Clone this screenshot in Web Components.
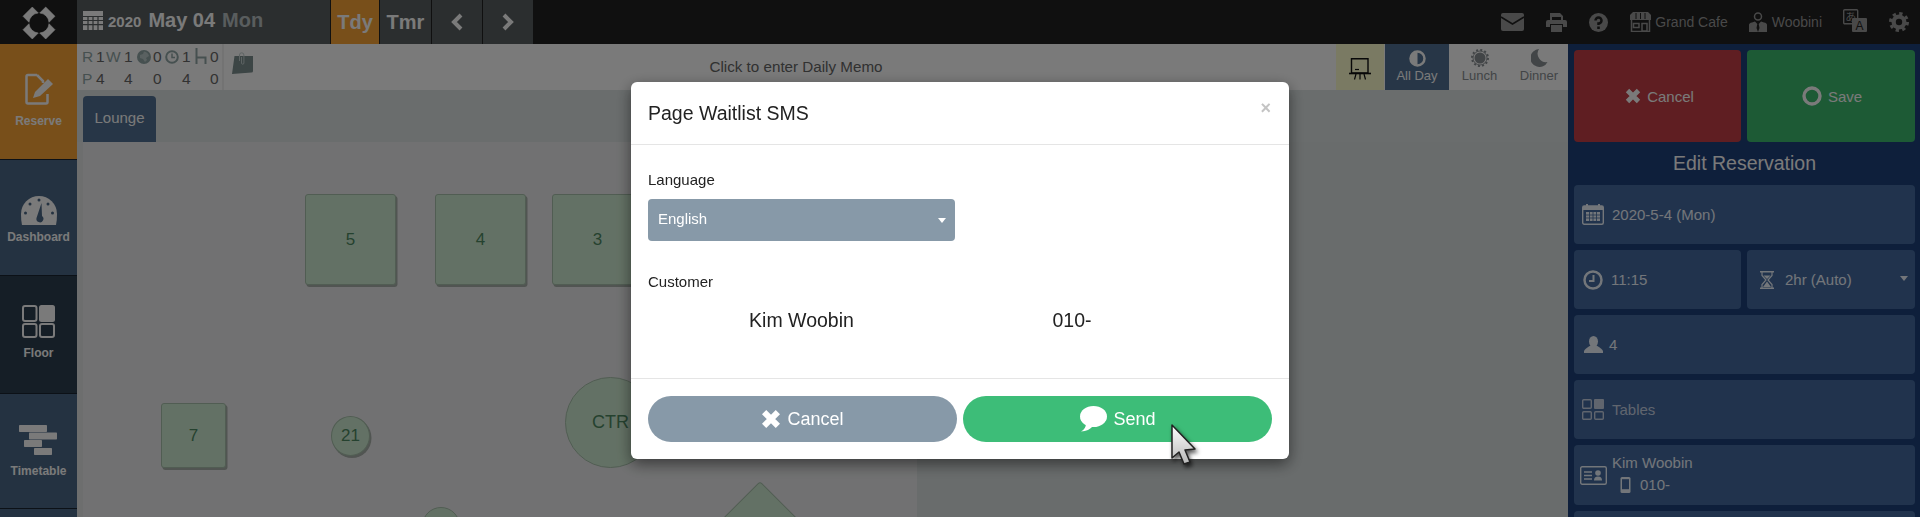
<!DOCTYPE html>
<html lang="en">
<head>
<meta charset="utf-8">
<title>Page Waitlist SMS</title>
<style>
html,body{margin:0;padding:0;height:517px;overflow:hidden;font-family:"Liberation Sans",Arial,sans-serif;font-size:15px;background:#ecedee}
</style>
</head>
<body>
<app-shell>
  <top-bar slot="top"></top-bar>
  <side-nav slot="nav">
    <nav-item label="Reserve" icon="reserve" style="--bg:#fba537;--pt:27px;--h:115px"></nav-item>
    <nav-item label="Dashboard" icon="gauge" style="--bg:#4d6a88;--pt:32px;--h:115px;--lm:2px"></nav-item>
    <nav-item label="Floor" icon="floor" style="--bg:#2d3f50;--pt:27px;--h:117px"></nav-item>
    <nav-item label="Timetable" icon="timetable" style="--bg:#4d6a88;--pt:28px;--h:114px;--lm:6px"></nav-item>
    <nav-item style="--bg:#4d6a88;--pt:0px;--h:40px"></nav-item>
  </side-nav>
  <main-area slot="main">
    <day-bar></day-bar>
    <tab-bar></tab-bar>
    <floor-plan>
      <floor-table style="--x:228px;--y:52px;--w:91px;--h:91px">5</floor-table>
      <floor-table style="--x:358px;--y:52px;--w:91px;--h:91px">4</floor-table>
      <floor-table style="--x:475px;--y:52px;--w:91px;--h:91px">3</floor-table>
      <floor-table style="--x:84px;--y:261px;--w:65px;--h:65px">7</floor-table>
      <floor-table style="--x:254px;--y:274px;--w:39px;--h:40px;--r:50%">21</floor-table>
      <floor-table style="--x:488px;--y:235px;--w:91px;--h:91px;--r:50%;--fs:18px;--s:0">CTR</floor-table>
      <floor-table style="--x:345px;--y:365px;--w:38px;--h:38px;--r:50%;--s:0"></floor-table>
      <floor-table style="--x:647px;--y:354px;--w:72px;--h:72px;--rot:45deg;--s:0"></floor-table>
    </floor-plan>
  </main-area>
  <res-panel slot="panel"></res-panel>
</app-shell>
<sms-modal></sms-modal>

<script>
const svg=(w,h,vb,body,extra='')=>`<svg xmlns="http://www.w3.org/2000/svg" width="${w}" height="${h}" viewBox="${vb}" fill="currentColor" ${extra}>${body}</svg>`;
const I={
 logo:svg(34,34,'-17 -17 34 34',[0,90,180,270].map(a=>`<path transform="rotate(${a})" d="M.7 -10L6.700 -16L16 -6.700L10 -.7A10 10 0 0 0 .7 -10Z" stroke="currentColor" stroke-width=".6" stroke-linejoin="round"/>`).join('')),
 cal:svg(20,20,'0 0 20 20','<path d="M0 1H20V20H0Z"/><path d="M0 6.500H20M0 10.500H20M0 14.700H20M5 6V20M10 6V20M15 6V20" stroke="#5a6062" stroke-width="1.200"/>'),
 left:svg(14,18,'0 0 14 18','<path d="M11 2L4 9L11 16" fill="none" stroke="currentColor" stroke-width="4"/>'),
 right:svg(14,18,'0 0 14 18','<path d="M3 2L10 9L3 16" fill="none" stroke="currentColor" stroke-width="4"/>'),
 mail:svg(23,18,'0 0 23 18','<rect width="23" height="18" rx="2"/><path d="M0 4L11.500 11L23 4" fill="none" stroke="#222" stroke-width="1.500"/>'),
 print:svg(21,19,'0 0 21 19','<path d="M4 0H14L17 3V8H15V4H6V8H4Z"/><path d="M2 7H19A2 2 0 0 1 21 9V14H17V11H4V14H0V9A2 2 0 0 1 2 7Z"/><path d="M5 12H16V19H5Z"/>'),
 help:svg(19,19,'0 0 19 19','<circle cx="9.500" cy="9.500" r="9.500"/><path d="M6.500 7.500A3 3 0 1 1 9.500 10.500V12" fill="none" stroke="#222" stroke-width="2.500"/><rect x="8.200" y="13.500" width="2.600" height="2.500" fill="#222"/>'),
 shop:svg(21,20,'0 0 21 20','<path d="M3 0H18L21 3V8H0V3Z"/><path d="M6 1V7M10.500 1V7M15 1V7" stroke="#222" stroke-width="1"/><path d="M1.500 8V19.500H19.500V8M3.500 11.500H9V15.500H3.500ZM12 11.500H17V19H12Z" fill="none" stroke="currentColor" stroke-width="1.500"/>'),
 user:svg(18,20,'0 0 18 20','<circle cx="9" cy="4.500" r="3.500" fill="none" stroke="currentColor" stroke-width="1.500"/><path d="M0 20V13Q0 11 3 10.500L6 9.500L8.300 12L7.500 16L9 20L10.500 16L9.700 12L12 9.500L15 10.500Q18 11 18 13V20Z"/>'),
 lang:`<svg xmlns="http://www.w3.org/2000/svg" width="24" height="23" viewBox="0 0 24 23"><rect x=".7" y=".7" width="14" height="14" rx="1" fill="none" stroke="currentColor" stroke-width="1.400"/><text x="7.700" y="12" font-size="11" text-anchor="middle" fill="currentColor" font-family="'Noto Sans CJK JP',sans-serif">あ</text><rect x="9" y="9" width="15" height="14" rx="1" fill="currentColor"/><text x="16.500" y="21" font-size="12" text-anchor="middle" fill="#222" font-family="'Liberation Sans',sans-serif">A</text></svg>`,
 gear:svg(20,20,'0 0 20 20','<circle cx="10" cy="10" r="7.500"/><circle cx="10" cy="10" r="8.500" fill="none" stroke="currentColor" stroke-width="3" stroke-dasharray="3.300 3.370"/><circle cx="10" cy="10" r="3.200" fill="#222"/>'),
 reserve:svg(28,32,'0 0 28 32','<path d="M12 2H3Q1.500 2 1.500 3.500V29Q1.500 30.500 3 30.500H21Q22.500 30.500 22.500 29V21M12 2L18 8V10" fill="none" stroke="currentColor" stroke-width="2.500"/><path d="M23 6L28 11L15 23L8 25L10 19Z"/>'),
 gauge:svg(36,32,'0 0 36 32','<path d="M1 31Q0 27 0 20A18 18 0 0 1 36 20Q36 27 35 31Z"/><circle cx="18" cy="6" r="1.500" fill="#4d6a88"/><circle cx="9" cy="10" r="1.500" fill="#4d6a88"/><circle cx="27" cy="10" r="1.500" fill="#4d6a88"/><circle cx="4.500" cy="19" r="1.500" fill="#4d6a88"/><circle cx="31.500" cy="19" r="1.500" fill="#4d6a88"/><path d="M20.500 9L21 22A3.500 3.500 0 1 1 15.500 24Z" fill="#4d6a88"/>'),
 floor:svg(33,33,'0 0 33 33','<rect x="1" y="1" width="13.500" height="15" rx="2" fill="none" stroke="currentColor" stroke-width="2"/><rect x="17" y="0" width="16" height="17" rx="2.500"/><rect x="1" y="19" width="13.500" height="13" rx="2" fill="none" stroke="currentColor" stroke-width="2"/><rect x="18" y="19" width="14" height="13" rx="2" fill="none" stroke="currentColor" stroke-width="2"/>'),
 timetable:svg(39,30,'0 0 39 30','<rect x="0" y="0" width="28" height="7" rx=".7"/><rect x="10" y="7.500" width="28" height="7" rx=".7"/><rect x="5" y="15" width="18" height="7" rx=".7"/><rect x="15" y="23" width="18" height="7" rx=".7"/>'),
 globe:svg(14,14,'0 0 14 14','<circle cx="7" cy="7" r="7"/><path d="M7 1.500Q11 2 12 6L9 8L10 10L8 12L6 9L3 8L3 5L6 4Z" fill="#fff" opacity=".4"/>'),
 clock:svg(14,14,'0 0 14 14','<circle cx="7" cy="7" r="5.800" fill="none" stroke="currentColor" stroke-width="2"/><path d="M7 3.500V7.500H10" fill="none" stroke="currentColor" stroke-width="1.500"/>'),
 chair:svg(12,17,'0 0 12 17','<path d="M1.500 0V16M1.500 9.500H10.500V16" fill="none" stroke="currentColor" stroke-width="2"/>'),
 clip:svg(21,23,'0 0 21 23','<path d="M2.500 4H21V19Q21 20.500 19.500 20.500L0 22Z"/><path d="M7.500 9V3A2.200 2.200 0 0 1 11.900 3V11A1.200 1.200 0 0 1 9.500 11V5" fill="none" stroke="#c3d0d0" stroke-width="1"/>'),
 board:svg(22,22,'0 0 22 22','<path d="M2.500 .7H19V15H2.500Z" fill="none" stroke="currentColor" stroke-width="1.400"/><path d="M0 15.500H22" stroke="currentColor" stroke-width="1.600"/><path d="M6 11.500H10" stroke="currentColor" stroke-width="1.200"/><path d="M7 16L5.500 21.500M11 16V21.500M15 16L16.500 21.500" stroke="currentColor" stroke-width="1.200"/>'),
 half:svg(17,17,'0 0 17 17','<circle cx="8.500" cy="8.500" r="7" fill="none" stroke="currentColor" stroke-width="2.500"/><path d="M8.500 1.500A7 7 0 0 0 8.500 15.500Z"/>'),
 sun:svg(18,18,'0 0 18 18','<circle cx="9" cy="9" r="5.500"/><circle cx="9" cy="9" r="7" fill="none" stroke="currentColor" stroke-width=".9"/><circle cx="9" cy="9" r="8" fill="none" stroke="currentColor" stroke-width="2" stroke-dasharray="2 2.190"/>'),
 moon:svg(17,18,'0 0 17 18','<path d="M8 0A9 9 0 1 0 16.500 13A8.500 8.500 0 0 1 8 0Z"/>'),
 x:(s)=>svg(s,s,'0 0 16 16','<path d="M2.500 2.500L13.500 13.500M13.500 2.500L2.500 13.500" fill="none" stroke="currentColor" stroke-width="4.800"/>'),
 ring:svg(20,20,'0 0 20 20','<circle cx="10" cy="10" r="8" fill="none" stroke="currentColor" stroke-width="3.400"/>'),
 bubble:svg(28,26,'0 0 28 26','<ellipse cx="14.500" cy="10.500" rx="13.500" ry="10.500"/><path d="M7 17Q7 23 2 25.500Q10 25 14 20Z"/>'),
 pcal:svg(22,21,'0 0 22 21','<rect x=".7" y="2" width="20.600" height="18.300" rx="1.500" fill="none" stroke="currentColor" stroke-width="1.400"/><rect x="4" y="0" width="2" height="4"/><rect x="16" y="0" width="2" height="4"/><path d="M1 2H21V6H1Z"/><path d="M4 8H18V17H4Z"/><path d="M4 11H18M4 14H18M7.500 8V17M11 8V17M14.500 8V17" stroke="#456ca1" stroke-width=".8"/>'),
 pclock:svg(20,20,'0 0 20 20','<circle cx="10" cy="10" r="8.500" fill="none" stroke="currentColor" stroke-width="2.500"/><path d="M10.500 5V11H6" fill="none" stroke="currentColor" stroke-width="2"/>'),
 glass:svg(14,18,'0 0 14 18','<path d="M0 .7H14M0 17.300H14" stroke="currentColor" stroke-width="1.600"/><path d="M2 1V4.500L6 9L2 13.500V17M12 1V4.500L8 9L12 13.500V17" fill="none" stroke="currentColor" stroke-width="1.200"/><path d="M3.500 4.500H10.500L7 8ZM7 10.500L11 16H3Z"/>'),
 person:svg(19,17,'0 0 19 17','<ellipse cx="9.500" cy="5.500" rx="4.500" ry="5.500"/><path d="M0 17V15Q1 12.500 6.500 9.500H12.500Q18 12.500 19 15V17Z"/>'),
 ptables:svg(22,21,'0 0 22 21','<rect x=".7" y=".7" width="8.600" height="8.600" rx="1" fill="none" stroke="currentColor" stroke-width="1.400"/><rect x="12" y="0" width="10" height="10" rx="1"/><rect x=".7" y="12.700" width="8.600" height="7.600" rx="1" fill="none" stroke="currentColor" stroke-width="1.400"/><rect x="12.700" y="12.700" width="8.600" height="7.600" rx="1" fill="none" stroke="currentColor" stroke-width="1.400"/>'),
 card:svg(27,19,'0 0 27 19','<rect x=".7" y=".7" width="25.600" height="17.600" rx="1.500" fill="none" stroke="currentColor" stroke-width="1.400"/><path d="M4 6H12M4 9.500H12M4 13H12" stroke="currentColor" stroke-width="1.400"/><circle cx="18" cy="7" r="2.800"/><path d="M14 14.500Q14 10.500 18 10.500Q22 10.500 22 14.500Z"/>'),
 phone:svg(11,16,'0 0 11 16','<rect x=".5" y="0" width="10" height="16" rx="1.500"/><rect x="2" y="2.200" width="7" height="10" fill="#456ca1"/>'),
};

class Base extends HTMLElement{
  constructor(){super();this.attachShadow({mode:'open'});this.shadowRoot.innerHTML=this.render();}
  render(){return ''}
}
customElements.define('app-shell',class extends Base{render(){return `<style>
:host{display:grid;grid-template-columns:77px 1491px 352px;grid-template-rows:44px 473px;width:1920px;height:517px;overflow:hidden}
.t{grid-column:1/4;display:block}
</style>
<slot class="t" name="top"></slot><slot name="nav"></slot><slot name="main"></slot><slot name="panel"></slot>`}});

customElements.define('top-bar',class extends Base{render(){return `<style>
:host{display:flex;height:44px;background:#222;color:#fff;font-weight:bold;grid-column:1/4}
.logo{width:77px;display:flex;align-items:center;justify-content:center;color:#fff;flex:none;padding-top:2px;box-sizing:border-box}
.date{width:253px;background:#5a6062;display:flex;align-items:center;box-sizing:border-box;padding:0 0 4px 6px;flex:none}
.date svg{margin-right:5px}
.y{font-size:15px;margin-right:7px;margin-top:3px}.d{font-size:20px;margin-right:7px}.w{font-size:20px;color:#bac2c4}
.tile{background:#5a6062;display:flex;align-items:center;justify-content:center;font-size:20px;margin-left:1px;flex:none;height:44px}
.tdy{background:#fba537;width:48px}.tmr{width:51px}.arr{width:50px}
.right{margin-left:auto;display:flex;align-items:center;color:#999;font-weight:normal;font-size:14px;padding-right:11px}
.right svg{flex:none}.g{display:flex;align-items:center}
</style>
<div class="logo">${I.logo}</div>
<div class="date">${I.cal}<span class="y">2020</span><span class="d">May 04</span><span class="w">Mon</span></div>
<div class="tile tdy" style="margin-left:1px">Tdy</div><div class="tile tmr">Tmr</div>
<div class="tile arr">${I.left}</div><div class="tile arr">${I.right}</div>
<div class="right"><span class="g" style="margin-right:22px">${I.mail}</span><span class="g" style="margin-right:22px">${I.print}</span><span class="g" style="margin-right:22px">${I.help}</span>
<span class="g" style="margin-right:21px;gap:4px">${I.shop}<span>Grand Cafe</span></span>
<span class="g" style="margin-right:21px;gap:5px">${I.user}<span>Woobini</span></span>
<span class="g" style="margin-right:22px;margin-top:-3px">${I.lang}</span><span class="g">${I.gear}</span></div>`}});

customElements.define('side-nav',class extends Base{render(){return `<style>:host{display:block;width:77px;height:473px;overflow:hidden;background:#4d6a88}</style><slot></slot>`}});

customElements.define('nav-item',class extends Base{render(){
  const ic=I[this.getAttribute('icon')]||'';const l=this.getAttribute('label')||'';
  return `<style>
  :host{display:flex;flex-direction:column;align-items:center;box-sizing:content-box;height:var(--h);background:var(--bg);border-bottom:1px solid #1a2530;color:#fff;font:bold 12px "Liberation Sans",Arial,sans-serif}
  .i{height:36px;margin-top:var(--pt);display:flex;align-items:center;justify-content:center}
  .l{margin-top:var(--lm,7px);line-height:14px}
  </style><div class="i">${ic}</div>${l?`<div class="l">${l}</div>`:''}`}});

customElements.define('main-area',class extends Base{render(){return `<style>:host{display:flex;flex-direction:column;height:473px;width:1491px;overflow:hidden}</style><slot></slot>`}});

customElements.define('day-bar',class extends Base{render(){return `<style>
:host{display:flex;height:46px;background:#fff;color:#666;flex:none}
.stats{width:147px;display:grid;grid-template-columns:14px 10px 18px 13px 16px 12px 17px 13px 15px 14px;grid-template-rows:23px 21px;align-items:center;align-content:center;padding-left:5px;box-sizing:border-box;border-right:2px solid #f0f0f0;font-size:15.500px;color:#6a6a6a;line-height:1}
.k{color:#92a8a8}.k svg{display:block}
.clip{width:32px;display:flex;align-items:flex-start;padding:8px 0 0 8px;box-sizing:border-box;color:#7d9090}
.memo{flex:1;text-align:center;line-height:46px;color:#666;font-size:15.200px}
.btn{display:flex;flex-direction:column;align-items:center;font-size:13px;line-height:14px;color:#8a9094;padding-top:5px;box-sizing:border-box;gap:2px;flex:none}
.board{width:48px;background:#ffffd0;color:#111;justify-content:center;margin-right:1px;padding-top:3px}
.on{background:#527294;color:#fff;width:64px}
.a{width:61px}.b{width:58px}
.bi{height:18px;display:flex;align-items:center}
</style>
<div class="stats">
<span class="k">R</span><span>1</span><span class="k">W</span><span>1</span><span class="k">${I.globe}</span><span>0</span><span class="k">${I.clock}</span><span>1</span><span class="k">${I.chair}</span><span>0</span>
<span class="k">P</span><span>4</span><span></span><span>4</span><span></span><span>0</span><span></span><span>4</span><span></span><span>0</span>
</div>
<div class="clip">${I.clip}</div>
<div class="memo">Click to enter Daily Memo</div>
<div class="btn board">${I.board}</div>
<div class="btn on"><span class="bi">${I.half}</span><span>All Day</span></div>
<div class="btn a"><span class="bi">${I.sun}</span><span>Lunch</span></div>
<div class="btn b"><span class="bi">${I.moon}</span><span>Dinner</span></div>`}});

customElements.define('tab-bar',class extends Base{render(){return `<style>
:host{display:flex;height:52px;background:#dde4e4;padding:6px 0 0 6px;box-sizing:border-box;flex:none}
.tab{width:73px;height:46px;background:#527294;color:#fff;border-radius:4px 4px 0 0;display:flex;align-items:center;justify-content:center;font-size:15px;padding-bottom:4px;box-sizing:border-box}
</style><div class="tab">Lounge</div>`}});

customElements.define('floor-plan',class extends Base{render(){return `<style>
:host{display:block;position:relative;flex:1;background:#ecedee;overflow:hidden;box-shadow:inset 6px 0 0 #e3e5e6}
.dark{position:absolute;left:840px;top:0;right:0;bottom:0;background:#dce2e2}
</style><div class="dark"></div><slot></slot>`}});

customElements.define('floor-table',class extends Base{render(){return `<style>
:host{position:absolute;left:var(--x);top:var(--y);width:var(--w);height:var(--h);box-sizing:border-box;display:flex;align-items:center;justify-content:center;background:#d0edd3;border:1px solid #a9c2ad;border-radius:var(--r,3px);color:#4f8a63;font-size:var(--fs,17px);transform:rotate(var(--rot,0deg));box-shadow:calc(var(--s,1)*1.500px) calc(var(--s,1)*2px) 0 #a9b2ab}
</style><slot></slot>`}});

customElements.define('res-row',class extends Base{render(){return `<style>
:host{display:flex;align-items:center;box-sizing:border-box;height:59px;background:#456ca1;border-radius:4px;padding-left:var(--pl,8px);gap:var(--gap,8px);color:#f0f6ff;font-size:15px;position:relative;flex:var(--f,none);overflow:hidden}
::slotted(svg){flex:none}
</style><slot></slot>`}});

customElements.define('res-panel',class extends Base{render(){return `<style>
:host{display:flex;flex-direction:column;height:473px;background:#1f417c;padding:6px 5px 0 6px;box-sizing:border-box;color:#fff;overflow:hidden;gap:6px}
.act{display:grid;grid-template-columns:167px 168px;gap:6px;height:92px;flex:none}
.act div{border-radius:4px;display:flex;align-items:center;justify-content:center;gap:6px;font-size:15px;box-sizing:border-box}
.c{background:#c63f47;padding-left:4px}.s{background:#3dbc70;padding-left:2px}
h2{margin:0;font-size:19.500px;font-weight:normal;text-align:center;height:31px;line-height:30px;flex:none}
.two{display:flex;gap:6px;flex:none}
.two res-row span{margin-top:-1px}
.caret{position:absolute;right:7px;top:26px;width:0;height:0;border:4px solid transparent;border-top:5px solid currentColor;border-bottom:0}
.n{display:flex;flex-direction:column;gap:4px;line-height:18px;padding-bottom:2px}
</style>
<div class="act"><div class="c">${I.x(16)}<span>Cancel</span></div><div class="s">${I.ring}<span>Save</span></div></div>
<h2>Edit Reservation</h2>
<res-row>${I.pcal}<span>2020-5-4 (Mon)</span></res-row>
<div class="two"><res-row style="--f:0 0 167px;--pl:9px">${I.pclock}<span>11:15</span></res-row>
<res-row style="--f:0 0 168px;--pl:13px;--gap:11px">${I.glass}<span>2hr (Auto)</span><i class="caret"></i></res-row></div>
<res-row style="--pl:10px;--gap:6px">${I.person}<span>4</span></res-row>
<res-row style="color:#c9d3e6">${I.ptables}<span>Tables</span></res-row>
<res-row style="--pl:6px;--gap:5px;height:60px">${I.card}<div class="n"><span>Kim Woobin</span><span style="display:flex;align-items:center;gap:9px;padding-left:8px">${I.phone}<span>010-</span></span></div></res-row>
<res-row></res-row>`}});

customElements.define('sms-modal',class extends Base{render(){return `<style>
:host{position:fixed;inset:0;background:rgba(0,0,0,.52);display:flex;justify-content:center;align-items:flex-start;padding-top:82px;box-sizing:border-box;z-index:10}
.m{width:658px;height:377px;background:#fff;border-radius:6px;box-shadow:0 5px 15px rgba(0,0,0,.5);display:flex;flex-direction:column;color:#222;font-size:15px;box-sizing:border-box}
.h{height:63px;flex:none;display:flex;align-items:center;justify-content:space-between;padding:1px 17px 0;box-sizing:border-box;border-bottom:1px solid #e5e5e5;font-size:19.500px;color:#222}
.close{color:#c4c4c4;font-weight:bold;font-size:18px;margin:-11px 1px 0 0;line-height:1}
.b{flex:1;padding:25px 17px 0;box-sizing:border-box;display:flex;flex-direction:column}
label{line-height:20px;display:block}
.sel{width:307px;height:42px;background:#8799a8;color:#fff;border-radius:4px;margin:9px 0 31px;display:flex;align-items:center;justify-content:space-between;padding:0 9px 3px 10px;box-sizing:border-box}
.sel i{width:0;height:0;border:4px solid transparent;border-top:5px solid #fff;border-bottom:0;margin-top:3px}
.cust{display:grid;grid-template-columns:307px 234px;margin-top:8px;height:40px;align-items:center;text-align:center;font-size:19.500px}
.f{height:81px;flex:none;border-top:1px solid #e5e5e5;padding:17px 17px 0;box-sizing:border-box;display:flex;gap:6px}
.btn{flex:1;height:46px;border-radius:23px;color:#fff;font-size:18px;display:flex;align-items:center;justify-content:center;gap:6px}
.btn span{margin-top:1px}
.bc{background:#8799a8}.bs{background:#3dbd78}
.cursor{position:absolute;left:1170px;top:423px;filter:drop-shadow(2px 3px 2px rgba(0,0,0,.65))}
</style>
<div class="m">
<div class="h"><span>Page Waitlist SMS</span><span class="close">×</span></div>
<div class="b"><label>Language</label><div class="sel"><span>English</span><i></i></div>
<label>Customer</label><div class="cust"><span>Kim Woobin</span><span>010-</span></div></div>
<div class="f"><div class="btn bc">${I.x(20)}<span>Cancel</span></div><div class="btn bs">${I.bubble}<span>Send</span></div></div>
</div>
<svg class="cursor" width="28" height="44" viewBox="0 0 28 44"><defs><linearGradient id="cg" x1="0" y1="0" x2="0" y2="1"><stop offset="0" stop-color="#fff"/><stop offset="1" stop-color="#b8b8b8"/></linearGradient></defs><path d="M2 2V35L9 29L14 41L20 39L15 27L25 26Z" fill="url(#cg)" stroke="#222" stroke-width="1.500" stroke-linejoin="round"/></svg>`}});
</script>
</body>
</html>
